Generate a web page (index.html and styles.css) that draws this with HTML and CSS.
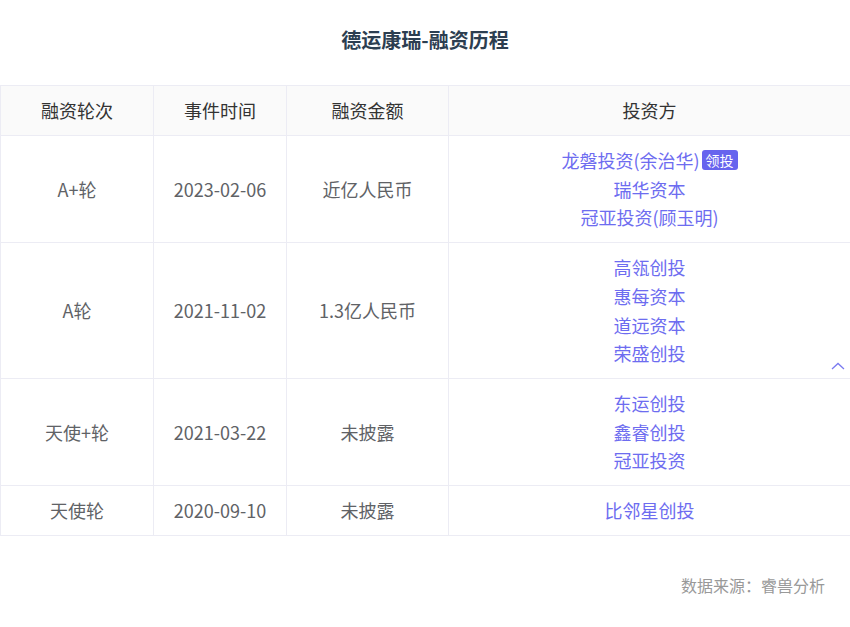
FILE: index.html
```html
<!DOCTYPE html>
<html lang="zh-CN">
<head>
<meta charset="utf-8">
<link rel="stylesheet" href="styles.css">
</head>
<body>
<div class="page">
  <h1 class="title">德运康瑞-融资历程</h1>
  <table class="fin">
    <colgroup>
      <col class="c1"><col class="c2"><col class="c3"><col class="c4">
    </colgroup>
    <thead>
      <tr><th>融资轮次</th><th>事件时间</th><th>融资金额</th><th>投资方</th></tr>
    </thead>
    <tbody>
      <tr>
        <td>A+轮</td><td>2023-02-06</td><td>近亿人民币</td>
        <td class="inv">
          <div>龙磐投资(余治华)<span class="badge">领投</span></div>
          <div>瑞华资本</div>
          <div>冠亚投资(顾玉明)</div>
        </td>
      </tr>
      <tr>
        <td>A轮</td><td>2021-11-02</td><td>1.3亿人民币</td>
        <td class="inv rel">
          <div>高瓴创投</div>
          <div>惠每资本</div>
          <div>道远资本</div>
          <div>荣盛创投</div>
          <svg class="chev" width="14" height="8" viewBox="0 0 14 8"><path d="M1 7 L7 1.5 L13 7" fill="none" stroke="#7b7bf0" stroke-width="1.3"/></svg>
        </td>
      </tr>
      <tr>
        <td>天使+轮</td><td>2021-03-22</td><td>未披露</td>
        <td class="inv">
          <div>东运创投</div>
          <div>鑫睿创投</div>
          <div>冠亚投资</div>
        </td>
      </tr>
      <tr>
        <td>天使轮</td><td>2020-09-10</td><td>未披露</td>
        <td class="inv"><div>比邻星创投</div></td>
      </tr>
    </tbody>
  </table>
  <div class="source">数据来源：睿兽分析</div>
</div>
</body>
</html>
```

FILE: styles.css
```css
html, body {
  margin: 0;
  padding: 0;
  background: #ffffff;
}
body {
  font-family: "Noto Sans CJK SC", "Noto Sans", sans-serif;
}
.page {
  width: 850px;
}
.title {
  margin: 0;
  padding-top: 27px;
  height: 85px;
  box-sizing: border-box;
  font-size: 20px;
  line-height: 26px;
  font-weight: 700;
  color: #2c3e50;
  text-align: center;
}
.fin {
  width: 850px;
  border-collapse: collapse;
  table-layout: fixed;
  font-size: 18px;
  line-height: 28.7px;
}
.c1 { width: 153px; }
.c2 { width: 133px; }
.c3 { width: 162px; }
.c4 { width: 402px; }
.fin th, .fin td {
  border: 1px solid #ececf4;
  text-align: center;
  vertical-align: middle;
  padding: 10px 8px;
}
.fin th {
  background: #fafafa;
  font-weight: 400;
  color: #333333;
  height: 29px;
}
.fin td {
  color: #606266;
}
.fin td.inv {
  color: #6d6cf0;
}
.rel {
  position: relative;
}
.badge {
  display: inline-block;
  background: #6764ee;
  color: #ffffff;
  font-size: 14px;
  line-height: 20px;
  padding: 0 4px;
  border-radius: 3px;
  margin-left: 2px;
  vertical-align: 2px;
}
.chev {
  position: absolute;
  right: 5px;
  bottom: 8px;
}
.source {
  text-align: right;
  padding-right: 25px;
  margin-top: 38px;
  font-size: 16px;
  line-height: 22px;
  color: #999999;
}
```
